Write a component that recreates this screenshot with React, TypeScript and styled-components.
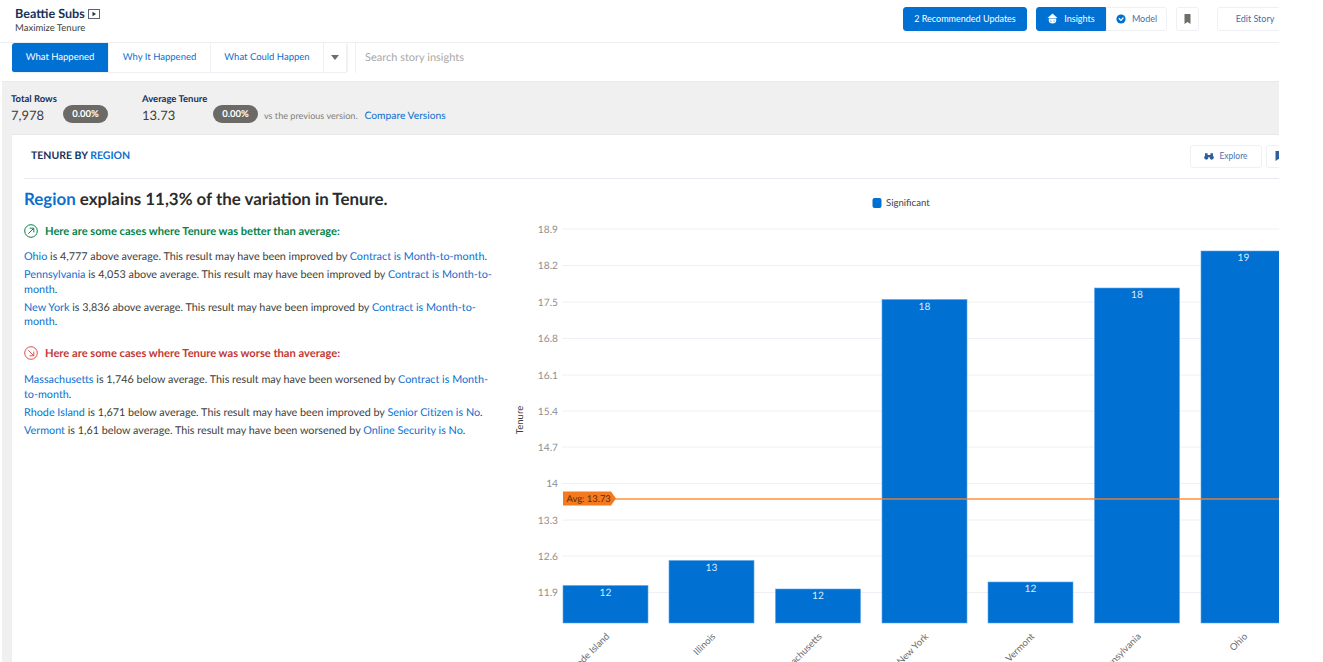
import React from 'react';
import styled, { createGlobalStyle } from 'styled-components';

const GlobalStyle = createGlobalStyle`
  html, body {
    margin: 0;
    padding: 0;
    background: #fff;
    font-family: 'Lato', 'Liberation Sans', sans-serif;
    color: #3e3e3c;
    text-rendering: geometricPrecision;
  }
`;

const BLUE = '#0070d2';
const LINK = '#0b6fcf';

const Page = styled.div`
  width: 1279px;
  height: 662px;
  overflow: hidden;
  display: flex;
  flex-direction: column;
`;

const Header = styled.header`
  height: 42px;
  flex: none;
  display: flex;
  align-items: flex-start;
  justify-content: space-between;
  padding: 7px 0 0 15px;
  box-sizing: border-box;
`;

const TitleBlock = styled.div`
  display: flex;
  flex-direction: column;
  margin-top: -1px;
`;

const TitleRow = styled.div`
  display: flex;
  align-items: center;
  gap: 3px;
  height: 15px;
  font-size: 12.6px;
  font-weight: 700;
  color: #16325c;
`;

const Subtitle = styled.div`
  margin-top: 1px;
  font-size: 9.5px;
  line-height: 13px;
  color: #3e3e3c;
`;

const Actions = styled.div`
  display: flex;
  align-items: center;
  margin-right: -14px;
`;

const ActionButton = styled.button<{ $primary?: boolean; $width: number; $gapAfter?: number; $joined?: 'left' | 'right' }>`
  width: ${(p) => p.$width}px;
  height: 24px;
  margin-right: ${(p) => p.$gapAfter ?? 0}px;
  display: flex;
  align-items: center;
  justify-content: center;
  gap: 6px;
  padding: 0 0 1px;
  font-family: inherit;
  font-size: 9px;
  color: ${(p) => (p.$primary ? '#fff' : '#3f6fb0')};
  background: ${(p) => (p.$primary ? BLUE : '#fff')};
  border: 1px solid ${(p) => (p.$primary ? BLUE : '#eef0f3')};
  border-radius: ${(p) => (p.$joined === 'left' ? '3px 0 0 3px' : p.$joined === 'right' ? '0 3px 3px 0' : '3px')};
`;

const TabRow = styled.div`
  height: 39px;
  flex: none;
  display: flex;
  align-items: flex-start;
  padding-left: 12px;
  border-top: 1px solid #eceef1;
  box-sizing: border-box;
`;

const Tabs = styled.div`
  display: flex;
  height: 30px;
  border: 1px solid #eef0f3;
  border-top: none;
  border-left: none;
  border-radius: 3px;
  box-sizing: border-box;
  overflow: hidden;
`;

const Tab = styled.div<{ $active?: boolean; $width: number }>`
  width: ${(p) => p.$width}px;
  display: flex;
  align-items: center;
  justify-content: center;
  font-size: 9.5px;
  color: ${(p) => (p.$active ? '#fff' : LINK)};
  background: ${(p) => (p.$active ? BLUE : '#fff')};
  border-right: 1px solid #eef0f3;
  box-sizing: border-box;
`;

const Caret = styled.div`
  width: 0;
  height: 0;
  border-left: 4px solid transparent;
  border-right: 4px solid transparent;
  border-top: 5px solid #6b6d70;
`;

const Search = styled.div`
  margin-left: 7px;
  height: 30px;
  flex: 1;
  display: flex;
  align-items: center;
  padding: 0 0 1px 9px;
  box-sizing: border-box;
  font-size: 11px;
  color: #a9a9a9;
  border-left: 1px solid #f0f1f3;
`;

const Workspace = styled.div`
  flex: 1;
  margin-left: 2px;
  display: flex;
  flex-direction: column;
  background: #f0f0f0;
  border-top: 1px solid #e9eaec;
  min-height: 0;
`;

const StatsBar = styled.div`
  height: 52px;
  flex: none;
  display: flex;
  align-items: flex-start;
  padding: 12px 0 0 9px;
  box-sizing: border-box;
`;

const Stat = styled.div<{ $width: number }>`
  width: ${(p) => p.$width}px;
  display: flex;
  flex-direction: column;
  flex: none;
`;

const StatLabel = styled.div`
  font-size: 9.5px;
  line-height: 12px;
  font-weight: 700;
  color: #16325c;
`;

const StatValue = styled.div`
  font-size: 13px;
  line-height: 19px;
  color: #3e3e3c;
`;

const Pill = styled.div<{ $after: number }>`
  flex: none;
  width: 45px;
  height: 18px;
  margin: 11px ${(p) => p.$after}px 0 0;
  display: flex;
  align-items: center;
  justify-content: center;
  border-radius: 9px;
  background: #6b6a66;
  color: #fff;
  font-size: 9.5px;
  font-weight: 700;
`;

const VersionNote = styled.div`
  margin: 15px 0 0 1px;
  font-size: 9.1px;
  line-height: 13px;
  color: #80807e;
  white-space: nowrap;
`;

const CompareLink = styled.a`
  margin: 15px 0 0 7px;
  font-size: 10.25px;
  line-height: 14px;
  color: ${LINK};
  white-space: nowrap;
`;

const Card = styled.section`
  flex: 1;
  min-height: 0;
  margin-left: 9px;
  background: #fff;
  border-top: 1px solid #e6e8eb;
  border-left: 1px solid #eceef1;
  display: flex;
  flex-direction: column;
`;

const CardHeader = styled.div`
  height: 44px;
  flex: none;
  margin-left: 12px;
  padding: 0 0 1px 7px;
  display: flex;
  align-items: center;
  justify-content: space-between;
  border-bottom: 1px solid #e8ebef;
  box-sizing: border-box;
`;

const CardTitle = styled.h2`
  margin: 0;
  font-size: 10.5px;
  font-weight: 700;
  color: #16325c;
  span {
    color: ${LINK};
  }
`;

const CardTools = styled.div`
  display: flex;
  gap: 4px;
  margin-right: -11px;
`;

const ToolButton = styled.button<{ $width: number }>`
  width: ${(p) => p.$width}px;
  height: 23px;
  padding: 0 0 1px;
  display: flex;
  align-items: center;
  justify-content: center;
  gap: 5px;
  font-family: inherit;
  font-size: 8.5px;
  color: #4a72ad;
  background: #fff;
  border: 1px solid #eef0f3;
  border-radius: 3px;
`;

const CardBody = styled.div`
  flex: 1;
  min-height: 0;
  display: flex;
`;

const Narrative = styled.div`
  width: 498px;
  flex: none;
  padding: 9px 15px 0 12px;
  box-sizing: border-box;
`;

const Headline = styled.h1`
  margin: 0;
  font-size: 16.9px;
  line-height: 21px;
  font-weight: 700;
  color: #2b2b2b;
  span {
    color: ${LINK};
  }
`;

const CaseHeading = styled.div<{ $tone: string; $top: number }>`
  margin-top: ${(p) => p.$top}px;
  display: flex;
  align-items: center;
  gap: 7px;
  height: 16px;
  font-size: 11.15px;
  font-weight: 700;
  color: ${(p) => p.$tone};
`;

const CaseList = styled.div<{ $top: number }>`
  margin-top: ${(p) => p.$top}px;
  display: flex;
  flex-direction: column;
  gap: 4px;
`;

const CaseLine = styled.p`
  margin: 0;
  font-size: 10.8px;
  line-height: 14.3px;
  color: #3e3e3c;
  a {
    color: ${LINK};
  }
`;

const ChartArea = styled.div`
  flex: 1;
  min-width: 0;
  svg {
    display: block;
  }
`;

const CircleArrow = ({ color, down }: { color: string; down?: boolean }) => (
  <svg width="14" height="14" viewBox="0 0 14 14" fill="none" stroke={color} strokeWidth="1">
    <circle cx="7" cy="7" r="6.3" />
    {down ? <path d="M4.3 4.3 9.6 9.6M9.8 5.6v4.2H5.6" /> : <path d="M4.3 9.7 9.6 4.4M5.6 4.2h4.2v4.2" />}
  </svg>
);

const PlayBox = () => (
  <svg width="12" height="10" viewBox="0 0 12 10">
    <rect x="0.5" y="0.5" width="11" height="9" fill="none" stroke="#5c6470" />
    <path d="M4.5 2.8 8 5 4.5 7.2z" fill="#26323f" />
  </svg>
);

const InsightsIcon = () => (
  <svg width="11" height="11" viewBox="0 0 11 11" fill="#fff">
    <path d="M5.5 0.5 10.5 5H.5z" />
    <path d="M1.8 5.6h7.4v2.2c0 1.6-1.3 2.7-3.7 2.7s-3.7-1.1-3.7-2.7z" />
    <circle cx="3.9" cy="8" r=".6" fill={BLUE} />
    <circle cx="7.1" cy="8" r=".6" fill={BLUE} />
  </svg>
);

const ModelIcon = () => (
  <svg width="10" height="10" viewBox="0 0 10 10">
    <circle cx="5" cy="5" r="4.6" fill={BLUE} />
    <path d="M2.8 4.2 5 6.4 7.4 3.6" fill="none" stroke="#fff" strokeWidth="1.3" />
  </svg>
);

const BookmarkIcon = ({ color }: { color: string }) => (
  <svg width="7" height="10" viewBox="0 0 7 10" fill={color}>
    <path d="M0.5 0h6v10L3.5 8 .5 10z" />
  </svg>
);

const BinocularsIcon = () => (
  <svg width="10" height="8" viewBox="0 0 10 8" fill="#2e5f9f">
    <circle cx="2.3" cy="5.6" r="2.1" />
    <circle cx="7.7" cy="5.6" r="2.1" />
    <path d="M1 1.2h2.6v3H1zM6.4 1.2H9v3H6.4zM3.6 3h2.8v2H3.6z" />
  </svg>
);

const yTicks = [
  { label: '18.9', y: 229 },
  { label: '18.2', y: 265.5 },
  { label: '17.5', y: 302 },
  { label: '16.8', y: 338.5 },
  { label: '16.1', y: 375 },
  { label: '15.4', y: 411 },
  { label: '14.7', y: 447 },
  { label: '14', y: 483.5 },
  { label: '13.3', y: 520 },
  { label: '12.6', y: 556 },
  { label: '11.9', y: 592.5 },
];

const bars = [
  { name: 'Rhode Island', value: '12', x: 563, top: 585.5 },
  { name: 'Illinois', value: '13', x: 669, top: 560.5 },
  { name: 'Massachusetts', value: '12', x: 775.5, top: 589 },
  { name: 'New York', value: '18', x: 882, top: 299.5 },
  { name: 'Vermont', value: '12', x: 988, top: 582 },
  { name: 'Pennsylvania', value: '18', x: 1094.5, top: 288 },
  { name: 'Ohio', value: '19', x: 1201, top: 251 },
];

const OX = 510;
const OY = 179;

// chart coordinates below are page coordinates, the viewBox shifts them into the svg
const Chart = () => (
  <svg width="769" height="483" viewBox={`${OX} ${OY} 769 483`} fontFamily="Lato, 'Liberation Sans', sans-serif">
    <rect x="872.5" y="198" width="9" height="10" rx="2" fill={BLUE} />
    <text x="886" y="206" fontSize="9.6" fill="#3e3e3c">Significant</text>

    {yTicks.map((t) => (
      <g key={t.label}>
        <line x1="562" x2="1279" y1={t.y} y2={t.y} stroke="#eef0f5" strokeWidth="1" />
        <text x="558" y={t.y + 3.5} fontSize="10.2" fill="#8f8f8f" textAnchor="end">{t.label}</text>
      </g>
    ))}

    <text transform="translate(523 420) rotate(-90)" fontSize="9.5" fill="#3e3e3c" textAnchor="middle">Tenure</text>

    {bars.map((b) => (
      <g key={b.name}>
        <rect x={b.x} y={b.top} width="85" height={623 - b.top} fill={BLUE} stroke="#5ea6e6" strokeWidth="0.6" />
        <text x={b.x + 42.5} y={b.top + 10} fontSize="10.2" fill="#dbeafa" textAnchor="middle">{b.value}</text>
        <text
          transform={`translate(${b.x + 47} 637) rotate(-45)`}
          fontSize="9.5"
          fill="#6b6b6b"
          textAnchor="end"
        >
          {b.name}
        </text>
      </g>
    ))}

    <line x1="610" x2="1279" y1="499" y2="499" stroke="#ff7f1e" strokeOpacity="0.65" strokeWidth="1.8" />
    <path d="M563 491.5h48l5 7-5 7h-48z" fill="#f5791f" />
    <text x="566.5" y="502" fontSize="9.4" fill="#5a2c06">Avg: 13.73</text>
  </svg>
);

const App = () => (
  <Page>
    <GlobalStyle />
    <Header>
      <TitleBlock>
        <TitleRow>
          Beattie Subs <PlayBox />
        </TitleRow>
        <Subtitle>Maximize Tenure</Subtitle>
      </TitleBlock>
      <Actions>
        <ActionButton $primary $width={124} $gapAfter={9}>2 Recommended Updates</ActionButton>
        <ActionButton $primary $width={70} $joined="left"><InsightsIcon /> Insights</ActionButton>
        <ActionButton $width={61} $gapAfter={9} $joined="right"><ModelIcon /> Model</ActionButton>
        <ActionButton $width={23} $gapAfter={18}><BookmarkIcon color="#706e6b" /></ActionButton>
        <ActionButton $width={76}>Edit Story</ActionButton>
      </Actions>
    </Header>
    <TabRow>
      <Tabs>
        <Tab $active $width={97}>What Happened</Tab>
        <Tab $width={102}>Why It Happened</Tab>
        <Tab $width={113}>What Could Happen</Tab>
        <Tab $width={23}><Caret /></Tab>
      </Tabs>
      <Search>Search story insights</Search>
    </TabRow>
    <Workspace>
      <StatsBar>
        <Stat $width={52}>
          <StatLabel>Total Rows</StatLabel>
          <StatValue>7,978</StatValue>
        </Stat>
        <Pill $after={34}>0.00%</Pill>
        <Stat $width={71}>
          <StatLabel>Average Tenure</StatLabel>
          <StatValue>13.73</StatValue>
        </Stat>
        <Pill $after={5}>0.00%</Pill>
        <VersionNote>vs the previous version.</VersionNote>
        <CompareLink>Compare Versions</CompareLink>
      </StatsBar>
      <Card>
        <CardHeader>
          <CardTitle>TENURE BY <span>REGION</span></CardTitle>
          <CardTools>
            <ToolButton $width={72}><BinocularsIcon /> Explore</ToolButton>
            <ToolButton $width={24}><BookmarkIcon color="#2e5f9f" /></ToolButton>
          </CardTools>
        </CardHeader>
        <CardBody>
          <Narrative>
            <Headline><span>Region</span> explains 11,3% of the variation in Tenure.</Headline>
            <CaseHeading $tone="#04844b" $top={14}>
              <CircleArrow color="#04844b" />
              Here are some cases where Tenure was better than average:
            </CaseHeading>
            <CaseList $top={11}>
              <CaseLine><a>Ohio</a> is 4,777 above average. This result may have been improved by <a>Contract is Month-to-month</a>.</CaseLine>
              <CaseLine><a>Pennsylvania</a> is 4,053 above average. This result may have been improved by <a>Contract is Month-to-month</a>.</CaseLine>
              <CaseLine><a>New York</a> is 3,836 above average. This result may have been improved by <a>Contract is Month-to-month</a>.</CaseLine>
            </CaseList>
            <CaseHeading $tone="#c23934" $top={16}>
              <CircleArrow color="#d9534f" down />
              Here are some cases where Tenure was worse than average:
            </CaseHeading>
            <CaseList $top={12}>
              <CaseLine><a>Massachusetts</a> is 1,746 below average. This result may have been worsened by <a>Contract is Month-to-month</a>.</CaseLine>
              <CaseLine><a>Rhode Island</a> is 1,671 below average. This result may have been improved by <a>Senior Citizen is No</a>.</CaseLine>
              <CaseLine><a>Vermont</a> is 1,61 below average. This result may have been worsened by <a>Online Security is No</a>.</CaseLine>
            </CaseList>
          </Narrative>
          <ChartArea><Chart /></ChartArea>
        </CardBody>
      </Card>
    </Workspace>
  </Page>
);

export default App;
